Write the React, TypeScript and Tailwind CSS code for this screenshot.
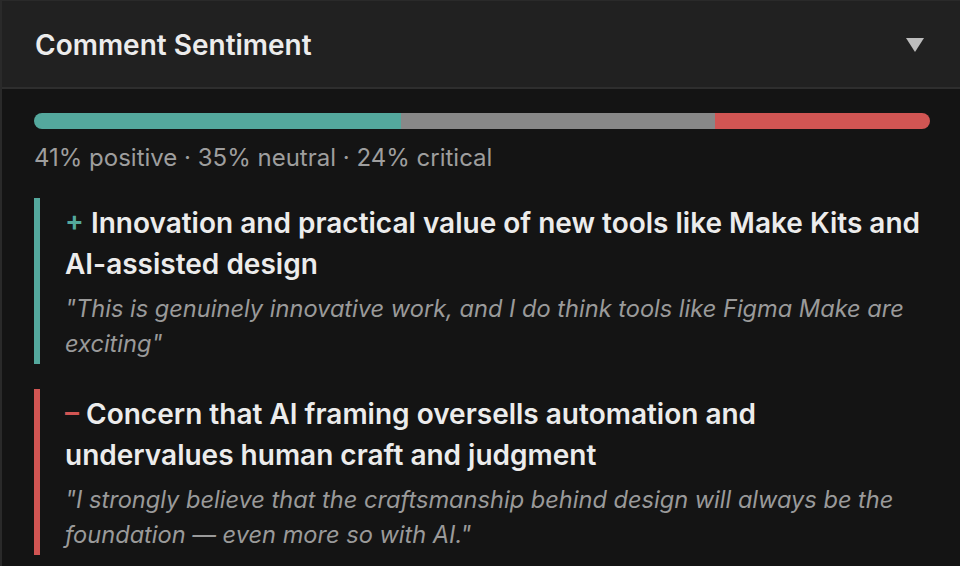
import React from "react";

const items = [
  {
    sign: "+",
    color: "#54a89d",
    title: "Innovation and practical value of new tools like Make Kits and AI-assisted design",
    quote: '"This is genuinely innovative work, and I do think tools like Figma Make are exciting"',
  },
  {
    sign: "–",
    color: "#d15553",
    title: "Concern that AI framing oversells automation and undervalues human craft and judgment",
    quote: '"I strongly believe that the craftsmanship behind design will always be the foundation — even more so with AI."',
  },
];

export default function App() {
  return (
    <div
      className="w-[960px] h-[566px] overflow-hidden bg-[#141414] border-l-2 border-t border-[#2a2a2a]"
      style={{ fontFamily: "Inter, 'Noto Sans', sans-serif" }}
    >
      <div className="h-[88px] bg-[#212121] border-b-2 border-[#2e2e2e] flex items-center justify-between pl-[33px] pr-[36px]">
        <h2 className="mt-[2px] text-[28px] font-semibold text-[#ececec]">Comment Sentiment</h2>
        <svg width="18" height="14" viewBox="0 0 18 14" className="mt-[1px]">
          <polygon points="0,0 18,0 9,14" fill="#bdbdbd" />
        </svg>
      </div>
      <div className="pl-[32px] pr-[30px] pt-[24px]">
        <div className="flex h-[16px] w-full rounded-full overflow-hidden">
          <div className="bg-[#54a89d] w-[41%]" />
          <div className="bg-[#888888] w-[35%]" />
          <div className="bg-[#d15553] w-[24%]" />
        </div>
        <div className="mt-[13px] text-[24px] leading-[32px] text-[#9e9e9e]">
          41% positive · 35% neutral · 24% critical
        </div>
        <div className="mt-[24px] flex flex-col gap-[25px]">
          {items.map((it, i) => (
            <div
              key={i}
              className="border-l-[6px] pl-[25px] pt-[5px] pb-[3px]"
              style={{ borderColor: it.color }}
            >
              <div className="text-[28px] leading-[41px] font-semibold text-[#ececec]">
                <span style={{ color: it.color }}>{it.sign}</span> {it.title}
              </div>
              <div className="mt-[6px] text-[23.6px] leading-[35px] italic text-[#9a9a9a]">{it.quote}</div>
            </div>
          ))}
        </div>
      </div>
    </div>
  );
}
